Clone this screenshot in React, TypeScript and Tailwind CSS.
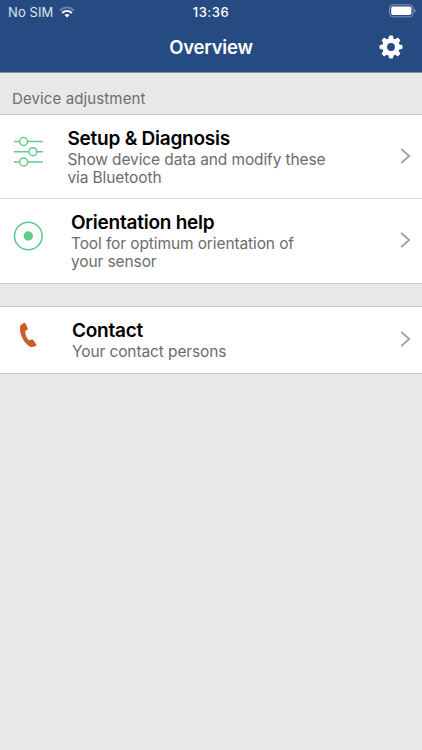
import type { ReactNode } from "react";

type RowProps = {
  icon: ReactNode;
  title: string;
  lines: string[];
  className: string;
  indent: string;
};

const App = () => {
  return (
    <div className="w-full h-[750px] bg-[#e8e8e8] font-['Inter','Liberation_Sans',sans-serif] overflow-hidden">
      <Header />

      <h2 className="h-[41px] pl-[12px] pt-[14px] text-[15px] leading-[24px] tracking-[0.12px] text-[#6d6d6d]">
        Device adjustment
      </h2>

      <div className="border-y border-[#cbcbcd] bg-white">
        <Row
          className="h-[84px] border-b border-[#dedee0]"
          indent="w-[67.5px]"
          icon={<SlidersIcon />}
          title="Setup & Diagnosis"
          lines={["Show device data and modify these", "via Bluetooth"]}
        />
        <Row
          className="h-[84px]"
          indent="w-[71px]"
          icon={<TargetIcon />}
          title="Orientation help"
          lines={["Tool for optimum orientation of", "your sensor"]}
        />
      </div>

      <div className="mt-[22px] border-y border-[#cbcbcd] bg-white">
        <Row
          className="h-[66px]"
          indent="w-[72px]"
          icon={<PhoneIcon />}
          title="Contact"
          lines={["Your contact persons"]}
        />
      </div>
    </div>
  );
};

export default App;

const Header = () => {
  return (
    <header className="h-[73px] bg-[#264b82] border-b border-[#8290a5] text-white">
      {/* Status bar */}
      <div className="grid grid-cols-3 items-center h-[24px] px-[8px]">
        <div className="flex items-center gap-[6px]">
          <span className="text-[13px] leading-[16px] tracking-[0.1px] text-[#dce4f0]">No SIM</span>
          <WifiIcon />
        </div>
        <span className="text-center text-[13px] leading-[16px] font-medium tracking-[0.5px]">13:36</span>
        <BatteryIcon />
      </div>

      {/* Title bar */}
      <div className="grid grid-cols-[1fr_auto_1fr] items-center h-[46px] px-[19px]">
        <span />
        <h1 className="text-[18.5px] leading-[24px] font-semibold tracking-[-0.2px]">Overview</h1>
        <button className="justify-self-end" aria-label="Settings">
          <GearIcon />
        </button>
      </div>
    </header>
  );
};

const Row = ({ icon, title, lines, className, indent }: RowProps) => {
  return (
    <div className={`flex ${className}`}>
      <div className={`${indent} shrink-0 pl-[12px] pt-[20px]`}>{icon}</div>
      <div className="grow pt-[11px]">
        <p className="text-[19px] leading-[25px] font-semibold tracking-[-0.24px] text-black">{title}</p>
        {lines.map((line) => (
          <p key={line} className="text-[15.5px] leading-[18px] tracking-[-0.11px] text-[#6c6c6c]">{line}</p>
        ))}
      </div>
      <div className="flex items-center pr-[11px] pb-[2px]">
        <svg viewBox="0 0 11 16" className="w-[11px] h-[16px]" fill="none" stroke="#a3a3a3" strokeWidth="1.9">
          <path d="M1.2 1L9.2 8L1.2 15" />
        </svg>
      </div>
    </div>
  );
};

const SlidersIcon = () => (
  <svg viewBox="0 0 32 34" className="w-[32px] h-[34px]" fill="none" stroke="#65ca8f" strokeWidth="1.5">
    <path d="M2 6.5H7.7M15.5 6.5H31M2 16.7H17M24.8 16.7H31M2 27H7.7M15.5 27H31" />
    <circle cx="11.6" cy="6.5" r="4" />
    <circle cx="20.9" cy="16.7" r="4" />
    <circle cx="11.6" cy="27" r="4" />
  </svg>
);

const TargetIcon = () => (
  <svg viewBox="0 0 32 34" className="w-[32px] h-[34px]">
    <circle cx="16.3" cy="17" r="13.8" fill="none" stroke="#5fca8b" strokeWidth="1.6" />
    <circle cx="16.3" cy="17" r="4.7" fill="#5fca8b" />
  </svg>
);

const PhoneIcon = () => (
  <svg viewBox="0 0 32 34" className="w-[32px] h-[34px] -mt-[8px]" fill="#cc5d29">
    <path d="M12 3.9C12.6 3.5 13.1 3.7 13.4 4.3L15.8 9.4C16.1 10 15.9 10.4 15.3 10.8L13.3 12C13.1 15.6 14.3 18.9 16.9 21.3L19.6 20.5C20.3 20.3 20.9 20.4 21.3 21L24.3 25.4C24.7 26 24.5 26.5 23.9 26.8L21.2 27.8C19.7 28.4 18.1 28.1 16.8 27.1C10.9 22.4 7.6 14.9 8 8.6C8.1 7.1 8.8 6 9.8 5.3Z" />
  </svg>
);

const GearIcon = () => (
  <svg viewBox="-12 -12 24 24" className="w-[24px] h-[24px]" fill="none" stroke="white">
    <circle r="6.3" strokeWidth="4.8" />
    <g fill="white" strokeWidth="2" strokeLinejoin="round">
      {[0, 45, 90, 135, 180, 225, 270, 315].map((angle) => (
        <path key={angle} d="M-1.6 -8L-1.1 -10.5H1.1L1.6 -8Z" transform={`rotate(${angle})`} />
      ))}
    </g>
  </svg>
);

const WifiIcon = () => (
  <svg viewBox="0 0 16 12" className="w-[16px] h-[12px]" fill="none" stroke="white" strokeWidth="2">
    <path d="M0.9 4.4C4.9 0.6 11.1 0.6 15.1 4.4" opacity="0.3" />
    <path d="M3.2 7C6 4.4 10 4.4 12.8 7" />
    <path d="M8 11.6L5.5 9C6.9 7.8 9.1 7.8 10.5 9Z" fill="white" stroke="none" />
  </svg>
);

const BatteryIcon = () => (
  <svg viewBox="0 0 28 14" className="w-[28px] h-[14px] justify-self-end -mr-[2px] mb-[2px]">
    <rect x="1.5" y="0.8" width="23.6" height="12" rx="3.3" fill="none" stroke="white" strokeOpacity="0.4" />
    <rect x="3.2" y="2.5" width="20.2" height="8.6" rx="1.8" fill="white" />
    <path d="M26.3 4.8Q27.8 5.3 27.8 6.8T26.3 8.8Z" fill="white" opacity="0.4" />
  </svg>
);
